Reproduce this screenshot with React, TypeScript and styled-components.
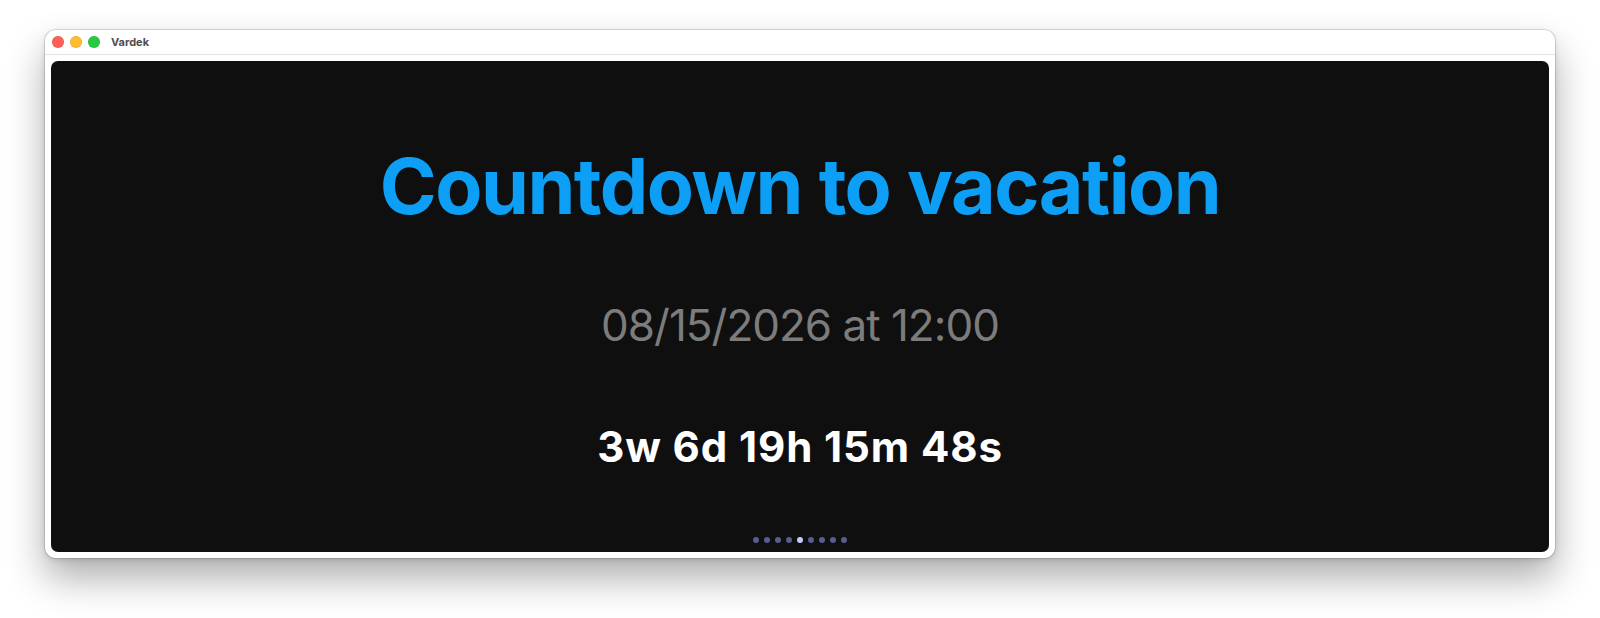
import React from "react";
import styled, { createGlobalStyle } from "styled-components";

const Global = createGlobalStyle`
  html, body {
    margin: 0;
    padding: 0;
    background: #ffffff;
  }
  body {
    font-family: Inter, "Noto Sans", "Liberation Sans", sans-serif;
    -webkit-font-smoothing: antialiased;
  }
`;

const Page = styled.div`
  width: 1600px;
  height: 618px;
  box-sizing: border-box;
  padding: 30px 45px 0;
  overflow: hidden;
`;

const Window = styled.div`
  height: 528px;
  box-sizing: border-box;
  background: #ffffff;
  border-radius: 11px;
  box-shadow: 0 0 0 1px rgba(0, 0, 0, 0.12), 0 20px 38px rgba(0, 0, 0, 0.32),
    0 2px 6px rgba(0, 0, 0, 0.12);
  display: flex;
  flex-direction: column;
  overflow: hidden;
`;

const TitleBar = styled.div`
  height: 25px;
  flex: none;
  box-sizing: border-box;
  display: flex;
  align-items: center;
  padding: 0 0 0 7px;
  border-bottom: 1px solid #e4e4e4;
`;

const Lights = styled.div`
  display: flex;
  gap: 6px;
  margin-right: 11px;
`;

const Light = styled.span<{ $color: string }>`
  width: 12px;
  height: 12px;
  border-radius: 50%;
  background: ${(p) => p.$color};
  box-shadow: inset 0 0 0 0.5px rgba(0, 0, 0, 0.12);
`;

const WindowTitle = styled.span`
  font-size: 11px;
  font-weight: 700;
  color: #4e4e4e;
  line-height: 1;
`;

const Body = styled.div`
  flex: 1;
  padding: 6px 6px 6px;
  display: flex;
`;

const Panel = styled.div`
  flex: 1;
  background: #0f0f0f;
  border-radius: 7px;
  display: flex;
  flex-direction: column;
  align-items: center;
  padding: 87px 0 9px;
  box-sizing: border-box;
`;

const Heading = styled.h1`
  margin: 0;
  font-size: 77px;
  line-height: 1;
  font-weight: 700;
  color: #0d9ff6;
  letter-spacing: -1.5px;
`;

const DateLine = styled.div`
  margin-top: 78px;
  font-size: 44px;
  line-height: 1;
  font-weight: 400;
  color: #7c7c7c;
  letter-spacing: -1px;
`;

const Remaining = styled.div`
  margin-top: 79px;
  font-size: 42px;
  line-height: 1;
  font-weight: 700;
  color: #ffffff;
  letter-spacing: 0.9px;
`;

const Dots = styled.div`
  margin-top: auto;
  display: flex;
  gap: 5px;
`;

const Dot = styled.span<{ $active?: boolean }>`
  width: 6px;
  height: 6px;
  border-radius: 50%;
  background: ${(p) => (p.$active ? "#c3cdf6" : "#575d8e")};
`;

export default function App() {
  const dots = Array.from({ length: 9 }, (_, i) => i);
  return (
    <>
      <Global />
      <Page>
        <Window>
          <TitleBar>
            <Lights>
              <Light $color="#fe5f57" />
              <Light $color="#febc2e" />
              <Light $color="#28c840" />
            </Lights>
            <WindowTitle>Vardek</WindowTitle>
          </TitleBar>
          <Body>
            <Panel>
              <Heading>Countdown to vacation</Heading>
              <DateLine>08/15/2026 at 12:00</DateLine>
              <Remaining>3w 6d 19h 15m 48s</Remaining>
              <Dots>
                {dots.map((i) => (
                  <Dot key={i} $active={i === 4} />
                ))}
              </Dots>
            </Panel>
          </Body>
        </Window>
      </Page>
    </>
  );
}
